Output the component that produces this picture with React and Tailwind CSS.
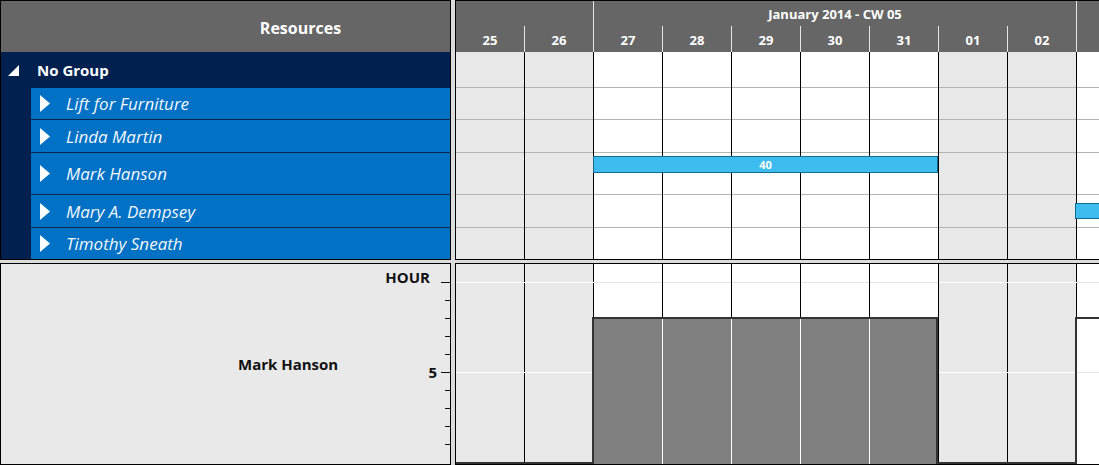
import React from 'react';

const days = [
  { label: '25', off: true },
  { label: '26', off: true },
  { label: '27', off: false },
  { label: '28', off: false },
  { label: '29', off: false },
  { label: '30', off: false },
  { label: '31', off: false },
  { label: '01', off: true },
  { label: '02', off: true },
  { label: '', off: false },
];

const weeks = [
  { label: '', days: days.slice(0, 2) },
  { label: 'January 2014 - CW 05', days: days.slice(2, 9) },
  { label: '', days: days.slice(9) },
];

const resources = [
  { name: 'Lift for Furniture', row: 'h-[32px] border-b border-[#0b2748]' },
  { name: 'Linda Martin', row: 'h-[33px] border-b border-[#0b2748]' },
  { name: 'Mark Hanson', row: 'h-[42px] border-b border-[#0b2748]' },
  { name: 'Mary A. Dempsey', row: 'h-[33px] border-b border-[#0b2748]' },
  { name: 'Timothy Sneath', row: 'h-[31px]' },
];

const gridRows = [
  'h-[36px] border-b border-[#b4b4b4]',
  'h-[32px] border-b border-[#b4b4b4]',
  'h-[33px] border-b border-[#b4b4b4]',
  'h-[42px] border-b border-[#b4b4b4]',
  'h-[33px] border-b border-[#b4b4b4]',
  'h-[31px]',
];

const Caret = () => (
  <svg width="10" height="17" viewBox="0 0 10 17" className="shrink-0">
    <polygon points="0,0 10,8.5 0,17" fill="#ffffff" />
  </svg>
);

const ResourceTree = () => (
  <div className="w-[451px] shrink-0 border border-black flex flex-col">
    <div className="h-[51px] bg-[#666666] flex items-center justify-center pl-[150px] pt-[2px] text-white font-bold text-[16px]">
      Resources
    </div>
    <div className="h-[36px] bg-[#00204f] flex items-center text-white">
      <svg width="11" height="11" viewBox="0 0 11 11" className="ml-[7px] shrink-0">
        <polygon points="11,0 11,11 0,11" fill="#ffffff" />
      </svg>
      <span className="ml-[18px] font-bold text-[15px] pt-[1px]">No Group</span>
    </div>
    <div className="flex flex-1 bg-[#00204f]">
      <div className="w-[30px] shrink-0" />
      <div className="flex-1 flex flex-col bg-[#0071c5]">
        {resources.map((r) => (
          <div key={r.name} className={`${r.row} flex items-center pl-[9px] text-[#f2f6fb]`}>
            <Caret />
            <span className="ml-[16px] italic text-[17px] font-normal pt-[1px]">{r.name}</span>
          </div>
        ))}
      </div>
    </div>
  </div>
);

const Bar = ({ className, label }) => (
  <div className={`absolute bg-[#3fbcef] border border-[#0d6c8f] flex items-center justify-center text-white font-bold text-[11px] leading-none ${className}`}>
    {label}
  </div>
);

const GanttGrid = () => (
  <div className="flex-1 min-w-0 overflow-hidden border-l border-t border-b border-black flex flex-col">
    <div className="flex h-[51px] bg-[#666666] text-white font-bold text-[13px]">
      {weeks.map((w, i) => (
        <div key={i} className="flex flex-col shrink-0">
          <div className="h-[25px] pt-[2px] border-r border-[#e4e4e4] flex items-center justify-center">{w.label}</div>
          <div className="flex h-[26px]">
            {w.days.map((d, j) => (
              <div key={j} className="w-[69px] shrink-0 pt-[3px] border-r border-[#e4e4e4] flex items-center justify-center">
                {d.label}
              </div>
            ))}
          </div>
        </div>
      ))}
    </div>
    <div className="relative flex flex-1">
      {days.map((d, i) => (
        <div key={i} className={`w-[69px] shrink-0 border-r border-black flex flex-col ${d.off ? 'bg-[#e8e8e8]' : 'bg-white'}`}>
          {gridRows.map((r, j) => (
            <div key={j} className={r} />
          ))}
        </div>
      ))}
      <Bar className="left-[137px] top-[104px] w-[345px] h-[17px]" label="40" />
      <Bar className="left-[619px] top-[151px] w-[80px] h-[16px]" label="" />
    </div>
  </div>
);

const ticks = [1, 2, 3, 4, 5, 6, 7, 8, 9, 10];

const LoadLegend = () => (
  <div className="w-[451px] shrink-0 border border-black bg-[#e9e9e9] relative flex items-center pl-[237px]">
    <span className="font-bold text-[15px] text-[#111111]">Mark Hanson</span>
    <svg className="absolute left-0 top-0" width="449" height="200" viewBox="0 0 449 200">
      {ticks.map((k) => {
        const y = Math.round(198 - 18.05 * k) + 0.5;
        return <line key={k} x1={k % 5 === 0 ? 440 : 444} x2="449" y1={y} y2={y} stroke="#111111" strokeWidth="1" />;
      })}
      <text x="429" y="19" textAnchor="end" fontWeight="700" fontSize="15" fill="#111111">HOUR</text>
      <text x="436" y="114" textAnchor="end" fontWeight="700" fontSize="15" fill="#111111">5</text>
    </svg>
  </div>
);

const LoadChart = () => (
  <div className="flex-1 min-w-0 overflow-hidden border-l border-t border-b border-black relative flex">
    {days.map((d, i) => (
      <div key={i} className={`w-[69px] shrink-0 border-r border-black ${d.off ? 'bg-[#e8e8e8]' : 'bg-white'}`} />
    ))}
    <svg className="absolute left-0 top-0" width="700" height="200" viewBox="0 0 700 200">
      {days.map((d, i) =>
        [18, 108].map((y) => (
          <rect key={`${i}-${y}`} x={69 * i} y={y} width={d.off ? 69 : 68} height="1" fill={d.off ? '#ffffff' : '#e6e6e6'} />
        ))
      )}
      <rect x="137" y="54" width="344" height="146" fill="#808080" />
      {[206, 275, 344, 413].map((x) => (
        <rect key={x} x={x} y="55" width="1" height="145" fill="#ffffff" />
      ))}
      <path d="M0 199 H137 V54 H481 V199 H620 V54 H700" fill="none" stroke="#333333" strokeWidth="2" />
    </svg>
  </div>
);

export default function App() {
  return (
    <div className="w-[1099px] h-[465px] overflow-hidden bg-[#dcdcdc] flex flex-col gap-[3px] font-['Open_Sans',sans-serif]">
      <div className="flex h-[260px] gap-[4px] shrink-0">
        <ResourceTree />
        <GanttGrid />
      </div>
      <div className="flex h-[202px] gap-[4px] shrink-0">
        <LoadLegend />
        <LoadChart />
      </div>
    </div>
  );
}
